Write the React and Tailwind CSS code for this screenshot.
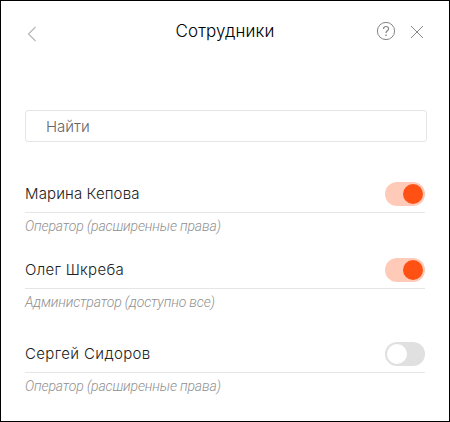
import React, { useState } from 'react';

const initialEmployees = [
  { id: 1, name: 'Марина Кепова', role: 'Оператор (расширенные права)', active: true, nameStyle: 'tracking-[0.12px]', className: 'mt-[34px]' },
  { id: 2, name: 'Олег Шкреба', role: 'Администратор (доступно все)', active: true, nameStyle: 'tracking-[0.28px]', className: 'mt-[13px]' },
  { id: 3, name: 'Сергей Сидоров', role: 'Оператор (расширенные права)', active: false, nameStyle: 'tracking-[0.36px]', className: 'mt-[21px]' }
];

const BackIcon = () => (
  <svg width="10" height="16" viewBox="0 0 10 16" fill="none" stroke="#b8b8b8" strokeWidth="1.2">
    <path d="M8.5 1L1.5 8L8.5 15" />
  </svg>
);

const HelpIcon = () => (
  <svg width="20" height="20" viewBox="0 0 20 20" fill="none" stroke="#868686">
    <circle cx="10" cy="10" r="8.6" strokeWidth="1" />
    <path d="M7.5 7.9C7.5 6.3 8.6 5.5 10 5.5C11.5 5.5 12.6 6.4 12.6 7.8C12.6 9.8 10 9.8 10 12" strokeWidth="1.2" />
    <path d="M9.3 14.3H10.7" strokeWidth="1.4" />
  </svg>
);

const CloseIcon = () => (
  <svg width="14" height="14" viewBox="0 0 14 14" fill="none" stroke="#868686" strokeWidth="1">
    <path d="M1 1L13 13M13 1L1 13" />
  </svg>
);

const Toggle = ({ checked, onChange, label }) => (
  <button
    type="button"
    role="switch"
    aria-checked={checked}
    aria-label={label}
    onClick={onChange}
    className={`flex h-6 w-10 shrink-0 items-center rounded-full px-0.5 ${
      checked ? 'justify-end bg-[#ffcab8]' : 'justify-start bg-[#e0e0e0]'
    }`}
  >
    <span className={`h-5 w-5 rounded-full ${checked ? 'bg-[#ff5114]' : 'bg-white'}`} />
  </button>
);

const EmployeeRow = ({ employee, onToggle }) => (
  <li className={employee.className}>
    <div className="flex h-[37px] items-center justify-between border-b border-[#e5e5e5]">
      <span className={`text-[15px] leading-5 font-[350] text-[#222] ${employee.nameStyle}`}>{employee.name}</span>
      <Toggle
        checked={employee.active}
        label={employee.name}
        onChange={() => onToggle(employee.id)}
      />
    </div>
    <p className="h-[26px] font-['Roboto','Liberation_Sans',sans-serif] text-[14px] leading-[26px] font-light tracking-[-0.15px] text-[#8f8f8f] italic">
      {employee.role}
    </p>
  </li>
);

const App = () => {
  const [employees, setEmployees] = useState(initialEmployees);
  const [search, setSearch] = useState('');

  const handleToggle = (id) => {
    setEmployees(prev => prev.map(item => (
      item.id === id ? { ...item, active: !item.active } : item
    )));
  };

  return (
    <div className="h-[422px] w-[450px] border border-black bg-white px-6 font-['Inter','Liberation_Sans',sans-serif]">
      <header className="grid h-[60px] grid-cols-[50px_1fr_50px] items-center">
        <button type="button" aria-label="Назад" className="mt-1.5 pl-0.5">
          <BackIcon />
        </button>
        <h1 className="text-center text-[17px] leading-6 font-[350] tracking-[0.15px] text-black">Сотрудники</h1>
        <div className="flex items-center justify-end gap-3.5 pr-px">
          <button type="button" aria-label="Помощь">
            <HelpIcon />
          </button>
          <button type="button" aria-label="Закрыть" className="mt-0.5">
            <CloseIcon />
          </button>
        </div>
      </header>

      <input
        type="text"
        value={search}
        onChange={(e) => setSearch(e.target.value)}
        placeholder="Найти"
        className="mt-[49px] block h-8 w-[402px] rounded-[3px] border border-[#e5e5e5] px-5 text-[15px] font-[350] text-[#333] outline-none placeholder:text-[#666]"
      />

      <ul>
        {employees.map(employee => (
          <EmployeeRow key={employee.id} employee={employee} onToggle={handleToggle} />
        ))}
      </ul>
    </div>
  );
};

export default App;
